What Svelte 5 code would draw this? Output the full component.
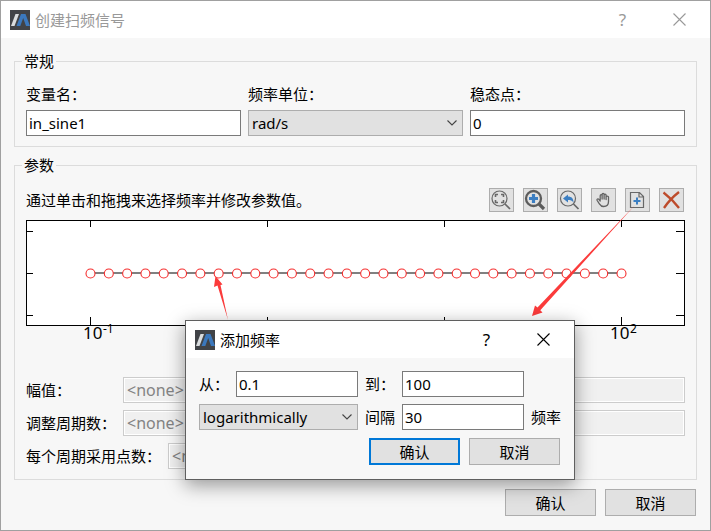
<script>
  let variableName = $state('in_sine1');
  let unit = $state('rad/s');
  let steadyPoint = $state('0');
  let from = $state('0.1');
  let to = $state('100');
  let count = $state('30');
  let spacing = $state('logarithmically');

  const points = Array.from({ length: 30 }, (_, i) => 64.5 + (i * 531) / 29);
  const xTicks = [64.5, 241.5, 418.5, 595.5];
  const yTicks = [11.5, 53.5, 95.5];
</script>

{#snippet logo()}
  <svg class="logo" viewBox="0 0 20 20" aria-hidden="true">
    <rect width="20" height="20" fill="#414347" />
    <path d="M1 16 5.500 4h3.500L4.500 16z" fill="#d9dcde" />
    <path d="M6.500 16 11 4h4.500L20 16h-4L13.200 8 10.300 16z" fill="#3b78bd" />
  </svg>
{/snippet}

{#snippet cross()}
  <svg class="cross" viewBox="0 0 13 13" aria-hidden="true">
    <path d="M.5 .5 12.500 12.500M12.500 .5 .5 12.500" stroke="currentColor" stroke-width="1.1" />
  </svg>
{/snippet}

{#snippet chevron()}
  <svg class="chevron" viewBox="0 0 10 6" aria-hidden="true">
    <path d="M.5 .5 5 5 9.500 .5" fill="none" stroke="#444" stroke-width="1.1" />
  </svg>
{/snippet}

<main class="window">
  <header class="titlebar inactive">
    {@render logo()}
    <h1>创建扫频信号</h1>
    <button class="caption" aria-label="帮助">?</button>
    <button class="caption" aria-label="关闭">{@render cross()}</button>
  </header>

  <div class="body">
    <fieldset>
      <legend>常规</legend>
      <div class="columns">
        <div class="stack">
          <label for="name">变量名：</label>
          <input id="name" type="text" bind:value={variableName} />
        </div>
        <div class="stack">
          <label for="unit">频率单位：</label>
          <div class="select">
            <select id="unit" bind:value={unit}>
              <option>rad/s</option>
              <option>Hz</option>
            </select>
            {@render chevron()}
          </div>
        </div>
        <div class="stack">
          <label for="steady">稳态点：</label>
          <input id="steady" type="text" bind:value={steadyPoint} />
        </div>
      </div>
    </fieldset>

    <fieldset>
      <legend>参数</legend>
      <div class="toolrow">
        <p>通过单击和拖拽来选择频率并修改参数值。</p>
        <div class="tools">
          <button aria-label="适应窗口">
            <svg viewBox="0 0 23 22" fill="none" stroke="#686868">
              <circle cx="9.500" cy="9.500" r="7.500" stroke-width="1.200" />
              <path d="M15 15l5 5" stroke-width="1.700" />
              <path d="M5.500 8V5.500H8M11 5.500h2.500V8M13.500 11v2.500H11M8 13.500H5.500V11" stroke-width="1.600" />
            </svg>
          </button>
          <button aria-label="放大">
            <svg viewBox="0 0 23 22" fill="none" stroke="#5c5c5c">
              <circle cx="9.500" cy="9.500" r="7.500" stroke-width="2.300" />
              <path d="M15 15l5 5" stroke-width="3.200" />
              <path d="M9.500 5v9M5 9.500h9" stroke="#3b7ec2" stroke-width="3.200" />
            </svg>
          </button>
          <button aria-label="还原缩放">
            <svg viewBox="0 0 23 22" fill="none" stroke="#686868">
              <circle cx="10" cy="9.500" r="7.500" stroke-width="1.200" />
              <path d="M15.500 15l5 5" stroke-width="1.700" />
              <path d="M5 9.500 10 5.500V7.500c3.500 0 5.500 2 5.500 6-1.500-2-3-2.500-5.500-2.500v2.500z" fill="#3b7ec2" stroke="none" />
            </svg>
          </button>
          <button aria-label="平移">
            <svg viewBox="0 0 23 22" fill="none" stroke="#626262" stroke-width="1.300" stroke-linejoin="round" stroke-linecap="round">
              <path d="M8.200 11V6.700c0-1.400 1.900-1.400 1.900 0V10M10.100 9V5.500c0-1.400 2-1.400 2 0V10M12.100 9V6.200c0-1.400 2-1.400 2 0V10.500M14.100 10V8c0-1.300 2.400-1.300 2.400 0v4.500c0 3-1.800 5-4.800 5-2.200 0-3.200-.9-4.300-2.700L5.200 11.500c-.8-1.300.8-2.200 1.700-1.100L8.200 12" />
            </svg>
          </button>
          <button aria-label="添加频率">
            <svg viewBox="0 0 23 22" fill="none" stroke="#686868">
              <path d="M4.500 3.500h9l4 4v11h-13zM13 3.500V8h4.500" stroke-width="1.200" />
              <path d="M11 8.500v7M7.500 12h7" stroke="#3b7ec2" stroke-width="2" />
            </svg>
          </button>
          <button aria-label="删除">
            <svg viewBox="0 0 23 22" fill="none" stroke="#bd4b2b">
              <path d="M3.500 3.500Q12 10 19 19M19 3Q10 10 4 19" stroke-width="2.300" />
            </svg>
          </button>
        </div>
      </div>

      <svg class="plot" viewBox="0 0 659 130" role="img" aria-label="频率图">
        <rect x="0.500" y="0.500" width="658" height="105" fill="#fff" stroke="#000" />
        <g stroke="#000">
          {#each xTicks as x}
            <path d="M{x} 1v6M{x} 97v8" />
          {/each}
          {#each yTicks as y}
            <path d="M1 {y}h6M650 {y}h8" />
          {/each}
        </g>
        <path d="M64.500 53h531" stroke="#808080" stroke-width="2" />
        {#each points as x}
          <circle cx={x} cy="53.500" r="4.500" fill="#fff" stroke="#f52d2d" stroke-width="1.100" />
        {/each}
        <text x="57" y="119" class="tick">10</text>
        <text x="77" y="113" class="power">-1</text>
        <text x="584" y="119" class="tick">10</text>
        <text x="604" y="113" class="power">2</text>
      </svg>

      <div class="params">
        <div class="param">
          <label for="amp">幅值：</label>
          <input id="amp" type="text" value="<none>" disabled />
        </div>
        <div class="param">
          <label for="settle">调整周期数：</label>
          <input id="settle" type="text" value="<none>" disabled />
        </div>
        <div class="param samples">
          <label for="samples">每个周期采用点数：</label>
          <input id="samples" type="text" value="<none>" disabled />
        </div>
      </div>
    </fieldset>

    <footer class="actions">
      <button class="push">确认</button>
      <button class="push">取消</button>
    </footer>
  </div>

  <svg class="arrows" viewBox="0 0 711 531" aria-hidden="true">
    <path d="M228 320 217.500 285.500 214 287 215.500 276 222.500 284.500 220.500 285z" />
    <path d="M635 205 537.500 307.500 535 305.500 532 316 542.500 312.500 540.300 310.300z" />
  </svg>

  <div class="dialog" role="dialog" aria-labelledby="dialog-title">
    <header class="titlebar">
      {@render logo()}
      <h2 id="dialog-title">添加频率</h2>
      <button class="caption" aria-label="帮助">?</button>
      <button class="caption" aria-label="关闭">{@render cross()}</button>
    </header>
    <div class="form">
      <label for="from">从：</label>
      <input id="from" type="text" bind:value={from} />
      <label for="to">到：</label>
      <input id="to" type="text" bind:value={to} />
      <span></span>
      <div class="select wide">
        <select aria-label="间隔方式" bind:value={spacing}>
          <option>logarithmically</option>
          <option>linearly</option>
        </select>
        {@render chevron()}
      </div>
      <label for="count">间隔</label>
      <input id="count" type="text" bind:value={count} />
      <span>频率</span>
    </div>
    <div class="actions">
      <button class="push default">确认</button>
      <button class="push">取消</button>
    </div>
  </div>
</main>

<style>
  :global(body) {
    background: #f7f7f7;
  }

  .window,
  .window :global(*) {
    box-sizing: border-box;
  }

  .window {
    position: relative;
    min-height: 100vh;
    border: 1px solid #a0a0a0;
    background: #f7f7f7;
    color: #000;
    font: 15px/20px 'Noto Sans', 'Noto Sans CJK SC', sans-serif;
  }

  button,
  input,
  select {
    margin: 0;
    border-radius: 0;
    font: inherit;
    color: inherit;
  }

  .titlebar {
    display: flex;
    align-items: center;
    height: 37px;
    padding-left: 9px;
    padding-right: 2px;
    background: #fff;
  }

  .inactive {
    color: #999;
  }

  .logo {
    width: 20px;
    height: 20px;
    margin-right: 5px;
  }

  h1,
  h2 {
    flex: 1;
    margin: 0;
    font-size: 15px;
    font-weight: 400;
  }

  .caption {
    display: flex;
    align-items: center;
    justify-content: center;
    width: 57px;
    height: 36px;
    padding: 0;
    border: 0;
    background: none;
    font-size: 17px;
  }

  .cross {
    width: 13px;
    height: 13px;
  }

  .body {
    padding: 13px 13px 14px;
  }

  fieldset {
    min-width: 0;
    margin: 0 0 8px;
    padding: 12px 11px 10px;
    border: 1px solid #dcdcdc;
  }

  legend {
    height: 21px;
    margin-left: -4px;
    padding: 0 2px;
  }

  .columns {
    display: grid;
    grid-template-columns: repeat(3, 1fr);
    gap: 7px;
  }

  .stack {
    display: flex;
    flex-direction: column;
    gap: 6px;
    min-width: 0;
  }

  input {
    width: 100%;
    min-width: 0;
    height: 26px;
    padding: 0 2px;
    border: 1px solid #7a7a7a;
    background: #fff;
  }

  input:disabled {
    padding: 0 3px;
    border-color: #ccc;
    background: #f0f0f0;
    box-shadow: inset 0 0 0 1px #fff;
    color: #838383;
    font-size: 16px;
  }

  .select {
    position: relative;
  }

  select {
    display: block;
    width: 100%;
    height: 26px;
    padding: 0 20px 0 3px;
    border: 1px solid #adadad;
    background: #e1e1e1;
    appearance: none;
  }

  .chevron {
    position: absolute;
    right: 6px;
    top: 10px;
    width: 10px;
    height: 6px;
    pointer-events: none;
  }

  .toolrow {
    display: flex;
    align-items: center;
    justify-content: space-between;
    margin-bottom: 8px;
  }

  p {
    margin: 0;
  }

  .tools {
    display: flex;
    gap: 9px;
    padding-right: 1px;
  }

  .tools button {
    width: 25px;
    height: 24px;
    padding: 0;
    border: 1px solid #adadad;
    background: #e1e1e1;
  }

  .tools svg {
    display: block;
    width: 23px;
    height: 22px;
  }

  .plot {
    display: block;
    width: 100%;
    margin-bottom: 27px;
  }

  .tick {
    font-size: 17px;
  }

  .power {
    font-size: 12px;
  }

  .params {
    display: flex;
    flex-direction: column;
    gap: 7px;
  }

  .param {
    display: grid;
    grid-template-columns: 97px 1fr;
    align-items: center;
  }

  .samples {
    grid-template-columns: 142px 1fr;
    padding-right: 130px;
  }

  .actions {
    display: flex;
    justify-content: flex-end;
    gap: 9px;
  }

  .body > .actions {
    margin-top: 9px;
    padding-right: 1px;
  }

  .body fieldset:nth-of-type(2) {
    margin-bottom: 0;
  }

  .push {
    width: 91px;
    height: 27px;
    padding: 0;
    border: 1px solid #adadad;
    background: #e1e1e1;
  }

  .default {
    border: 2px solid #0078d7;
  }

  .arrows {
    position: absolute;
    left: -1px;
    top: -1px;
    width: 711px;
    height: 531px;
    fill: #fb3b3b;
    pointer-events: none;
  }

  .dialog {
    position: absolute;
    left: 184px;
    top: 319px;
    width: 390px;
    padding-bottom: 14px;
    border: 1px solid #5f5f5f;
    background: #f7f7f7;
    box-shadow: 0 5px 18px rgba(0, 0, 0, 0.4);
  }

  .dialog .actions {
    padding: 8px 14px 0;
  }

  .form {
    display: grid;
    grid-template-columns: 30px 122px 30px 122px 30px;
    align-items: center;
    gap: 7px;
    padding: 13px 13px 0;
    white-space: nowrap;
  }

  .wide {
    grid-column: span 2;
  }
</style>
